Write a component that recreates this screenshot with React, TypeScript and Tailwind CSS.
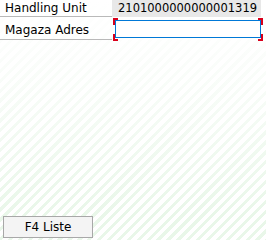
export default function App() {
  return (
    <div className="w-[266px] h-[240px] flex flex-col bg-white bg-[image:linear-gradient(to_bottom,#ffffff_0%,rgba(255,255,255,0.7)_35%,rgba(255,255,255,0)_90%),repeating-linear-gradient(135deg,#e9f7e9_0px,#e9f7e9_3px,#ffffff_3px,#ffffff_7px)] font-['DejaVu_Sans',sans-serif] text-[12px] text-black">
      {/* Handling Unit */}
      <div className="flex h-[17px]">
        <div className="w-[112px] border-b border-[#b9b9b9] pl-[5px] leading-[16px]">Handling Unit</div>
        <div className="w-[149px] h-[17px] bg-[#e8e8e8] pl-[6px] leading-[17px] text-[11.5px]">2101000000000001319</div>
      </div>
      {/* Magaza Adres */}
      <div className="flex h-[24px]">
        <div className="w-[112px] h-[23px] border-b border-[#b9b9b9] pl-[5px] pt-[5px] leading-[16px]">Magaza Adres</div>
        <div className="relative ml-[1px] w-[150px] h-[24px] pt-[3px] px-[2px]">
          <input className="w-[146px] h-[18px] border border-[#0078d7] bg-white outline-none px-1 text-[12px]" />
          <span className="absolute left-0 top-[1px] w-[5px] h-[7px] border-l-2 border-t-2 border-[#d9001b]" />
          <span className="absolute right-0 top-[1px] w-[5px] h-[7px] border-r-2 border-t-2 border-[#d9001b]" />
          <span className="absolute left-0 bottom-0 w-[5px] h-[7px] border-l-2 border-b-2 border-[#d9001b]" />
          <span className="absolute right-0 bottom-0 w-[5px] h-[7px] border-r-2 border-b-2 border-[#d9001b]" />
        </div>
      </div>
      <div className="flex-1" />
      <div className="pl-[3px] pb-[2px]">
        <button className="w-[90px] h-[22px] border border-[#a8a8a8] bg-[#f4f4f4] text-[12px] leading-[20px] text-black">F4 Liste</button>
      </div>
    </div>
  );
}
